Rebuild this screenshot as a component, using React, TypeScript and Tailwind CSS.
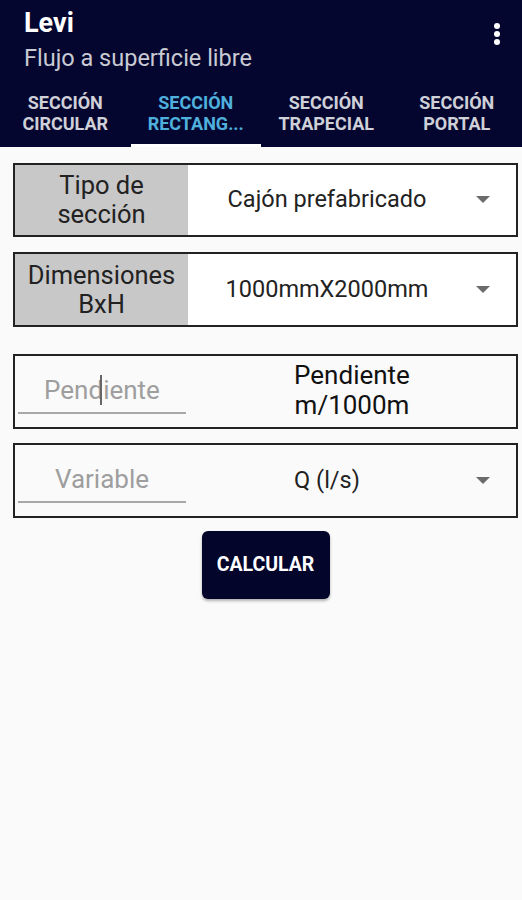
import { useState } from "react";

const tabs = [
  ["SECCIÓN", "CIRCULAR"],
  ["SECCIÓN", "RECTANG..."],
  ["SECCIÓN", "TRAPECIAL"],
  ["SECCIÓN", "PORTAL"],
];

function Arrow() {
  return (
    <svg width="14" height="8" viewBox="0 0 14 8" className="shrink-0">
      <path d="M0 0h14L7 7z" fill="#6b6b6b" />
    </svg>
  );
}

export default function App() {
  const [active, setActive] = useState(1);

  return (
    <div
      className="w-[522px] h-[900px] bg-[#fafafa] flex flex-col"
      style={{ fontFamily: "Roboto, 'Noto Sans', sans-serif" }}
    >
      {/* App bar */}
      <div className="bg-[#04062f] h-[147px] flex flex-col">
        <div className="flex justify-between pl-[24px] pr-[20px] pt-[7px]">
          <div>
            <div className="text-white text-[27px] font-bold leading-[32px]">Levi</div>
            <div className="text-[#c9cad3] text-[23.5px] leading-[30px] mt-[4px]">
              Flujo a superficie libre
            </div>
          </div>
          <div className="flex flex-col gap-[2px] pt-[16px] pr-[2px]">
            <span className="w-[6px] h-[6px] rounded-full bg-white" />
            <span className="w-[6px] h-[6px] rounded-full bg-white" />
            <span className="w-[6px] h-[6px] rounded-full bg-white" />
          </div>
        </div>

        {/* Tabs */}
        <div className="flex mt-auto">
          {tabs.map((t, i) => (
            <button
              key={i}
              onClick={() => setActive(i)}
              className={`flex-1 h-[58px] pb-[8px] flex flex-col items-center justify-center border-b-[3px] text-[18px] font-bold leading-[21px] ${
                active === i
                  ? "text-[#4fb0dd] border-white"
                  : "text-[#cfd0d8] border-transparent"
              }`}
            >
              <span>{t[0]}</span>
              <span>{t[1]}</span>
            </button>
          ))}
        </div>
      </div>

      {/* Form */}
      <div className="flex flex-col ml-[13px] mr-[4px] mt-[16px]">
        <div className="h-[74px] border-2 border-[#222] flex bg-white">
          <div className="w-[173px] bg-[#c8c8c8] flex items-center justify-center text-center text-[25.5px] leading-[29px] text-[#222]">
            Tipo de<br />sección
          </div>
          <div className="flex-1 flex items-center pr-[26px]">
            <span className="flex-1 text-center text-[23.5px] text-[#222] pr-[10px]">
              Cajón prefabricado
            </span>
            <Arrow />
          </div>
        </div>

        <div className="h-[75px] border-2 border-[#222] flex bg-white mt-[15px]">
          <div className="w-[173px] bg-[#c8c8c8] flex items-center justify-center text-center text-[25.5px] leading-[29px] text-[#222]">
            Dimensiones<br />BxH
          </div>
          <div className="flex-1 flex items-center pr-[26px]">
            <span className="flex-1 text-center text-[23.5px] text-[#222] pr-[10px]">
              1000mmX2000mm
            </span>
            <Arrow />
          </div>
        </div>

        <div className="h-[75px] border-2 border-[#222] flex mt-[27px]">
          <div className="w-[173px] pl-[3px] pr-[2px] flex flex-col justify-end pb-[13px]">
            <div className="border-b-2 border-[#a8a8a8] h-[46px] flex items-center justify-center text-[26px] text-[#9e9e9e]">
              <span>Pend</span>
              <span className="w-[2px] h-[30px] bg-[#666] -ml-[3px] mr-[1px]" />
              <span>iente</span>
            </div>
          </div>
          <div className="flex-1 flex items-center justify-center text-center text-[26px] leading-[30px] text-[#111] pb-[4px]">
            Pendiente<br />m/1000m
          </div>
        </div>

        <div className="h-[75px] border-2 border-[#222] flex mt-[14px]">
          <div className="w-[173px] pl-[3px] pr-[2px] flex flex-col justify-end pb-[13px]">
            <div className="border-b-2 border-[#a8a8a8] h-[46px] flex items-center justify-center text-[26px] text-[#9e9e9e]">
              Variable
            </div>
          </div>
          <div className="flex-1 flex items-center pr-[26px]">
            <span className="flex-1 text-center text-[23.5px] text-[#222] pr-[10px]">
              Q (l/s)
            </span>
            <Arrow />
          </div>
        </div>

        <div className="flex justify-center mt-[13px]">
          <button className="w-[128px] h-[68px] rounded-[6px] bg-[#03052b] text-white text-[19.5px] font-bold shadow-[0_2px_3px_rgba(0,0,0,0.3)]">
            CALCULAR
          </button>
        </div>
      </div>
    </div>
  );
}
